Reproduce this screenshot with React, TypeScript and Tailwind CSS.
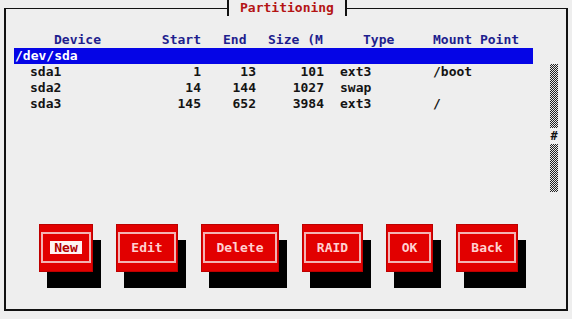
import React from "react";

const rows = [
  { d: "sda1", s: "1", e: "13", z: "101", t: "ext3", m: "/boot" },
  { d: "sda2", s: "14", e: "144", z: "1027", t: "swap", m: "" },
  { d: "sda3", s: "145", e: "652", z: "3984", t: "ext3", m: "/" },
];

const buttons = [
  { label: "New", w: "w-[54px]", focus: true },
  { label: "Edit", w: "w-[62px]", focus: false },
  { label: "Delete", w: "w-[78px]", focus: false },
  { label: "RAID", w: "w-[61px]", focus: false },
  { label: "OK", w: "w-[47px]", focus: false },
  { label: "Back", w: "w-[62px]", focus: false },
];

const grid =
  "grid grid-cols-[156px_31px_55px_68px_16px_93px_100px] h-[16px] items-center whitespace-nowrap";

export default function App() {
  return (
    <div
      className="w-[572px] h-[319px] bg-[#eeeeee] pt-[8px] px-[4px] overflow-hidden text-[13px] leading-[16px] font-bold"
      style={{ fontFamily: '"DejaVu Sans Mono", "Liberation Mono", monospace' }}
    >
      <div className="relative h-[303px] border-x-2 border-b-2 border-t border-[#111111]">
        {/* title */}
        <div className="absolute left-[221px] top-[-9px] h-[16px] w-[120px] border-x-2 border-[#111111] bg-[#eeeeee] flex items-center justify-center text-[#b41414]">
          Partitioning
        </div>

        <div className="pl-[8px] pt-[23px] flex">
          {/* table */}
          <div className="w-[519px]">
            <div className={`${grid} text-[#1e1e8e]`}>
              <div className="pl-[40px]">Device</div>
              <div className="flex justify-end">Start</div>
              <div className="pl-[22px]">End</div>
              <div className="pl-[12px]">Size (M</div>
              <div />
              <div className="pl-[23px]">Type</div>
              <div>Mount Point</div>
            </div>
            <div className="h-[16px] bg-[#0505e6] text-white flex items-center pl-[1px]">/dev/sda</div>
            {rows.map((r) => (
              <div key={r.d} className={`${grid} text-[#141414]`}>
                <div className="pl-[16px]">{r.d}</div>
                <div className="text-right">{r.s}</div>
                <div className="text-right">{r.e}</div>
                <div className="text-right">{r.z}</div>
                <div />
                <div>{r.t}</div>
                <div>{r.m}</div>
              </div>
            ))}
          </div>
          {/* scrollbar */}
          <div className="ml-[17px] mt-[32px] w-[8px] h-[128px] flex flex-col">
            <div className="h-[64px] bg-[repeating-conic-gradient(#222_0_25%,#e8e8e8_0_50%)] bg-[length:2px_2px]" />
            <div className="h-[16px] flex items-center justify-center text-[#111] text-[12px]">#</div>
            <div className="h-[48px] bg-[repeating-conic-gradient(#222_0_25%,#e8e8e8_0_50%)] bg-[length:2px_2px]" />
          </div>
        </div>

        {/* buttons */}
        <div className="mt-[32px] pl-[33px] flex gap-[23px]">
          {buttons.map((b) => (
            <div
              key={b.label}
              className={`${b.w} h-[48px] bg-[#e20000] border border-[#bc0000] shadow-[8px_16px_0_#000] pt-[7px] pb-[8px] px-[1px]`}
            >
              <div className="h-full border-2 border-[#f3b4b4] flex items-center justify-center">
                {b.focus ? (
                  <span className="bg-[#fff2f2] text-[#b00000] px-[4px] h-[13px] flex items-center">{b.label}</span>
                ) : (
                  <span className="text-[#ffd0d0]">{b.label}</span>
                )}
              </div>
            </div>
          ))}
        </div>
      </div>
    </div>
  );
}
